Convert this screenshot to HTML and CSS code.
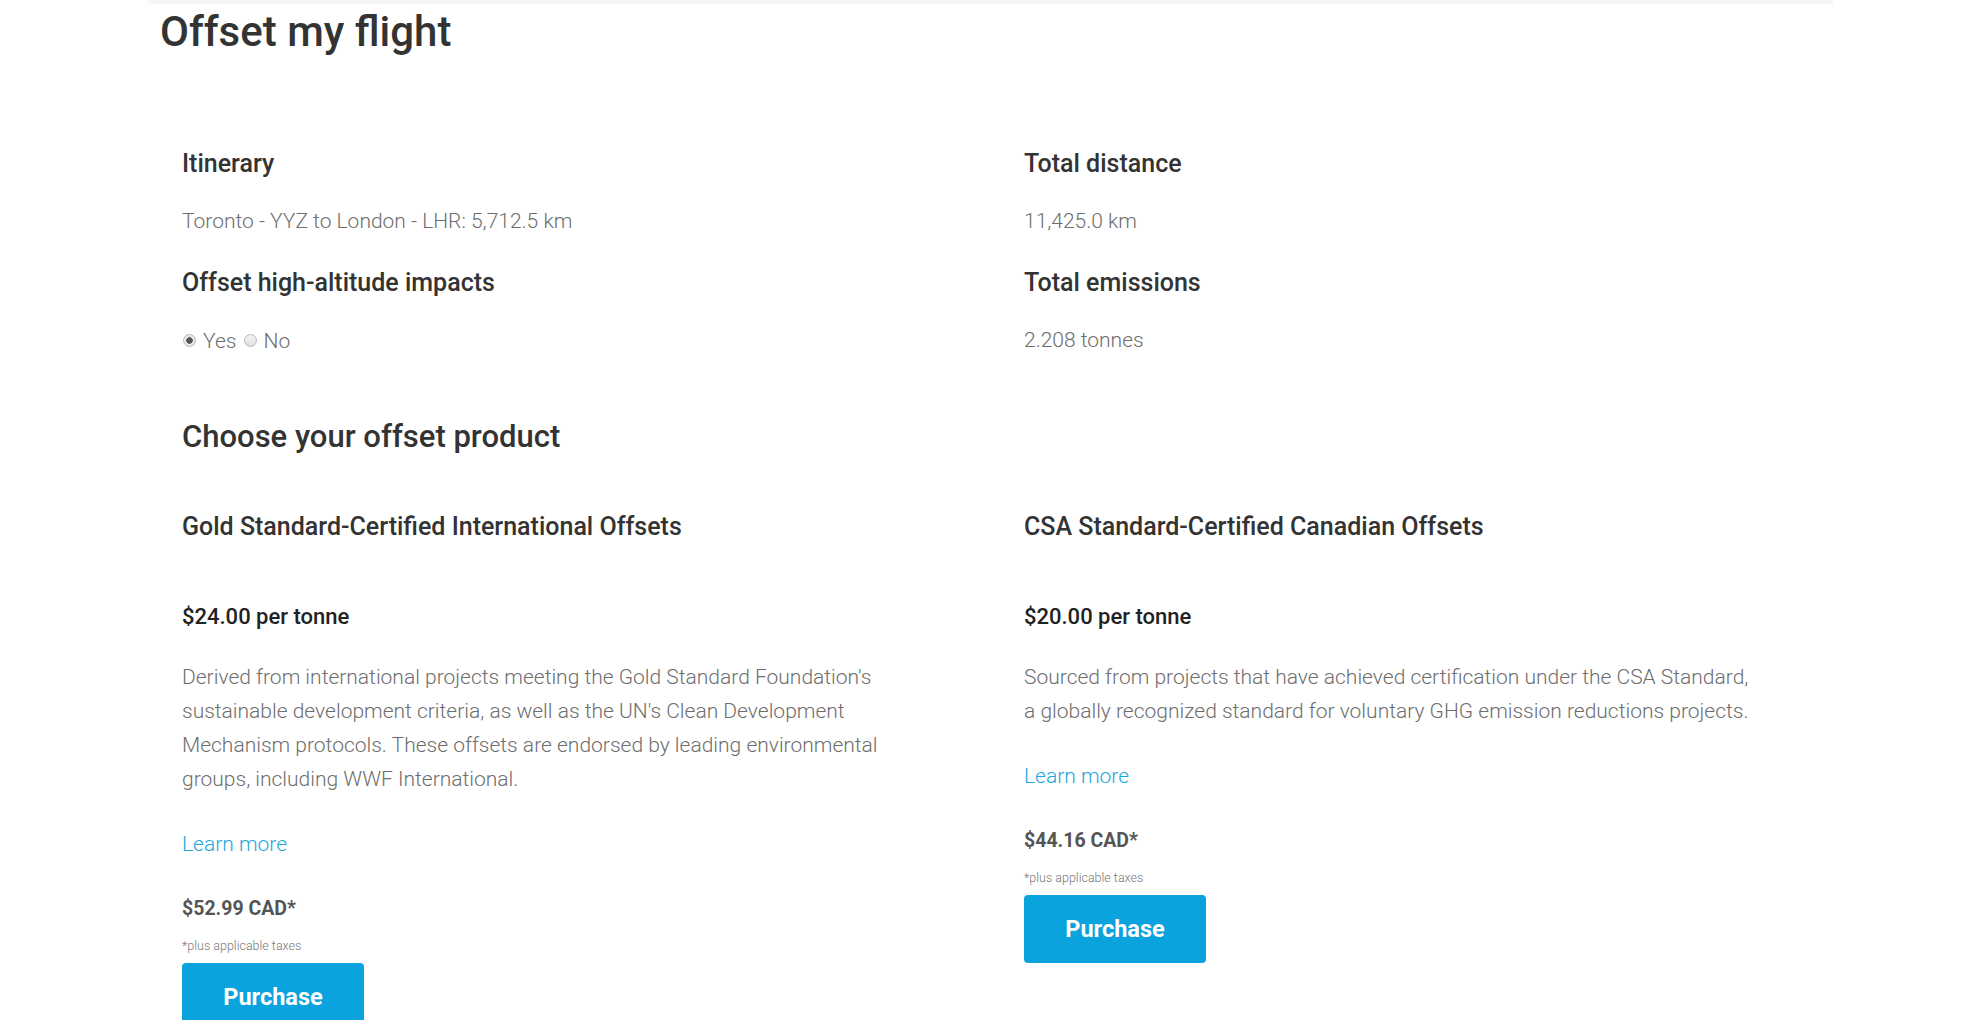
FILE: index.html
```html
<!DOCTYPE html>
<html>
<head>
    <title>Offset my flight</title>
    <link rel="stylesheet" href="styles.css">
</head>

<body>
    <div class="topbar"></div>

    <main class="page">
        <h1 class="title">Offset my flight</h1>

        <section class="summary">
            <div class="col">
                <h3 class="label">Itinerary</h3>
                <p class="value">Toronto - YYZ to London - LHR: 5,712.5 km</p>
                <h3 class="label">Offset high-altitude impacts</h3>
                <p class="value">
                    <label class="radio"><input type="radio" name="altitude" checked> Yes</label>
                    <label class="radio"><input type="radio" name="altitude"> No</label>
                </p>
            </div>
            <div class="col">
                <h3 class="label">Total distance</h3>
                <p class="value">11,425.0 km</p>
                <h3 class="label">Total emissions</h3>
                <p class="value">2.208 tonnes</p>
            </div>
        </section>

        <section class="products">
            <h2 class="section-title">Choose your offset product</h2>
            <div class="product-grid">
                <div class="product">
                    <h3 class="label product-name">Gold Standard-Certified International Offsets</h3>
                    <p class="rate">$24.00 per tonne</p>
                    <p class="desc">Derived from international projects meeting the Gold Standard Foundation's sustainable development criteria, as well as the UN's Clean Development Mechanism protocols. These offsets are endorsed by leading environmental groups, including WWF International.</p>
                    <a class="learn" href="#">Learn more</a>
                    <p class="total">$52.99 CAD*</p>
                    <p class="taxes">*plus applicable taxes</p>
                    <button class="buy">Purchase</button>
                </div>
                <div class="product">
                    <h3 class="label product-name">CSA Standard-Certified Canadian Offsets</h3>
                    <p class="rate">$20.00 per tonne</p>
                    <p class="desc">Sourced from projects that have achieved certification under the CSA Standard, a globally recognized standard for voluntary GHG emission reductions projects.</p>
                    <a class="learn" href="#">Learn more</a>
                    <p class="total">$44.16 CAD*</p>
                    <p class="taxes">*plus applicable taxes</p>
                    <button class="buy">Purchase</button>
                </div>
            </div>
        </section>
    </main>
</body>
</html>
```

FILE: styles.css
```css
body { font-family: Roboto, 'Liberation Sans', sans-serif; margin: 0; padding: 0; background: #fff; color: #333; }

.topbar { height: 4px; margin: 0 147px 0 148px; background-color: #f6f6f6; }

.page { padding: 0 0 0 160px; }

.title { font-size: 42px; font-weight: 500; line-height: 48px; margin: 4px 0 0; color: #333; }

.summary { display: grid; grid-template-columns: 735px 735px; column-gap: 107px; padding: 93px 0 0 22px; }

.label { font-size: 25px; font-weight: 500; line-height: 30px; margin: 0 0 27px; color: #333; }
.value { font-size: 21px; font-weight: 300; line-height: 30px; margin: 0 0 32px; color: #6e6e6e; }
.summary .col .value:last-child { margin-bottom: 0; }

.radio { display: inline-flex; align-items: center; }
.radio + .radio { margin-left: 1px; }
.radio input {
    appearance: none;
    width: 13px; height: 13px;
    margin: 0 7px 0 1px;
    border: 1px solid #b8b8b8;
    border-radius: 50%;
    background: linear-gradient(#f4f4f4, #dedede);
    box-sizing: border-box;
}
.radio input:checked { background: radial-gradient(circle, #555 0 3px, #e9e9e9 3.5px); }

.products { padding: 63px 0 0 22px; }
.section-title { font-size: 31px; font-weight: 500; line-height: 36px; margin: 0 0 57px; color: #333; }

.product-grid { display: grid; grid-template-columns: 735px 735px; column-gap: 107px; align-items: start; }
.product { display: flex; flex-direction: column; align-items: flex-start; }
.product-name { margin-bottom: 61px; }

.rate { font-size: 22px; font-weight: 500; line-height: 28px; margin: 0 0 29px; color: #222; }
.desc { font-size: 21px; font-weight: 300; line-height: 34px; margin: 0 0 33px; color: #6e6e6e; }

.learn { font-size: 21px; font-weight: 300; line-height: 30px; color: #1ea6e0; text-decoration: none; }
.learn:hover { text-decoration: underline; }

.total { font-size: 19.5px; font-weight: 700; line-height: 24px; margin: 38px 0 17px; color: #555; }
.taxes { font-size: 12.5px; font-weight: 300; line-height: 16px; margin: 0 0 9px; color: #777; }

.buy {
    width: 182px; height: 68px;
    border: none; border-radius: 4px;
    background-color: #0ba3dd; color: #fff;
    font-family: inherit; font-size: 23.5px; font-weight: 700;
    cursor: pointer;
}
```
